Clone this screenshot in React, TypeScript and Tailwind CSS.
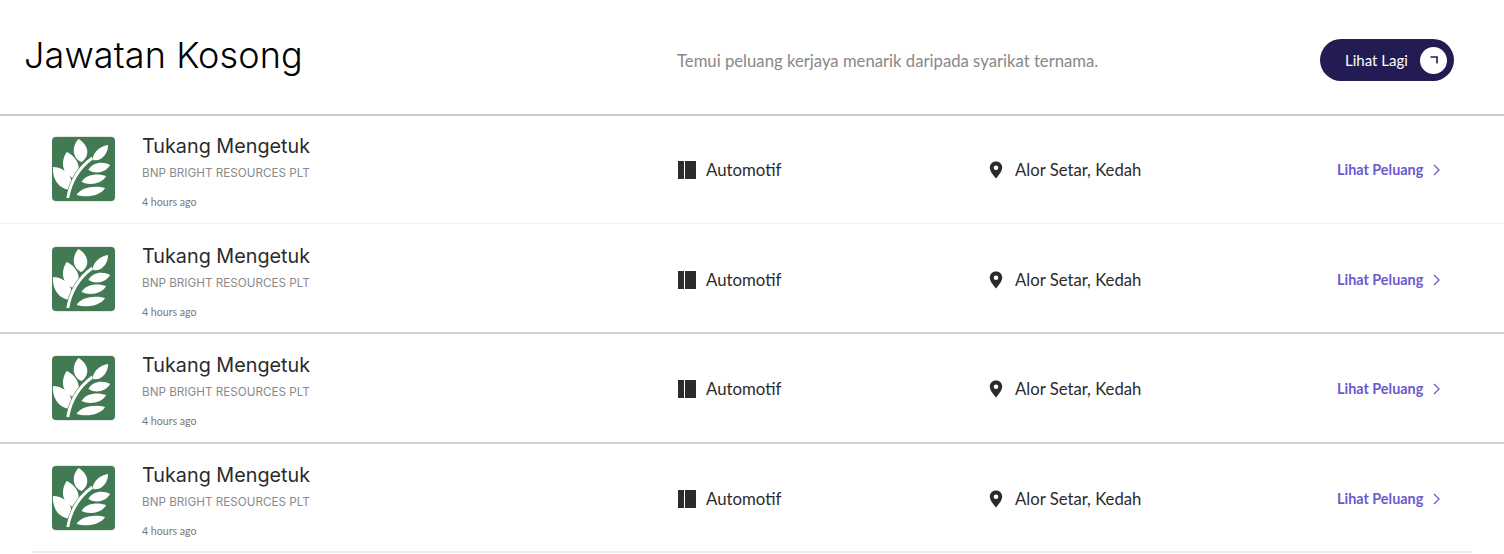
const LeafLogo = () => (
  <div className="w-[64px] h-[66px] shrink-0 -mt-[2px] border-y border-[#e3e6e3] rounded-[5px] flex items-center">
    <svg width="63" height="64" viewBox="0 0 64 64" preserveAspectRatio="none">
      <rect width="64" height="64" rx="4" fill="#427a53" />
      <g fill="#fff">
        <path d="M30 25C20 21 20 9 27 2C36 7 40 18 30 25Z" />
        <path d="M22 41C9 37 9 23 15 15C26 20 32 33 22 41Z" />
        <path d="M19 53C6 52 0 41 1 30C13 30 24 41 19 53Z" />
        <path d="M41 23C42 14 50 9 57 8C57 16 51 25 41 23Z" />
        <path d="M37 33C41 25 52 24 59 28C55 35 45 38 37 33Z" />
        <path d="M30 45C34 37 47 36 55 39C51 47 38 49 30 45Z" />
        <path d="M25 58C29 50 44 48 54 51C49 59 35 61 25 58Z" />
      </g>
      <path d="M16 61C19 44 27 31 41 21" fill="none" stroke="#427a53" strokeWidth="4" />
      <path d="M16 61C19 44 27 31 41 21" fill="none" stroke="#fff" strokeWidth="3" />
    </svg>
  </div>
)

const JobRow = ({ border }: { border: string }) => (
  <div className={`pl-[52px] flex items-center ${border}`}>
    <LeafLogo />
    <div className="w-[535px] ml-[26px] shrink-0">
      <p className="font-['Inter',sans-serif] text-[19.8px] leading-[28px] text-[#2b2b2b]">Tukang Mengetuk</p>
      <p className="font-['Inter',sans-serif] text-[11.7px] leading-[16px] mt-[5px] text-[#8a8a8a]">BNP BRIGHT RESOURCES PLT</p>
      <p className="font-['Lato',sans-serif] text-[10.6px] leading-[14px] mt-[14px] text-[#777]">4 hours ago</p>
    </div>
    <div className="w-[312px] shrink-0 flex items-center gap-[10px] font-['Lato',sans-serif] text-[16.8px] text-[#2b2b2b]">
      <div className="w-[18px] h-[18px] ml-[1px] flex gap-[1px]">
        <span className="w-[6px] bg-[#2b2b2b]" />
        <span className="w-[11px] bg-[#2b2b2b]" />
      </div>
      <span>Automotif</span>
    </div>
    <div className="w-[348px] shrink-0 mt-[1px] flex items-center gap-[12px] font-['Lato',sans-serif] text-[16.7px] text-[#2b2b2b]">
      <svg width="14" height="18" viewBox="0 0 14 18" fill="#2b2b2b">
        <path fillRule="evenodd" d="M7 0.5C3.3 0.5 0.8 3.2 0.8 6.6C0.8 10.8 5 15 7 17.5C9 15 13.2 10.8 13.2 6.6C13.2 3.2 10.7 0.5 7 0.5ZM7 4.4A2.3 2.3 0 1 1 7 9A2.3 2.3 0 1 1 7 4.4Z" />
      </svg>
      <span>Alor Setar, Kedah</span>
    </div>
    <div className="flex items-center gap-[9px] font-['Lato',sans-serif] text-[14.4px] font-bold text-[#6a5acd]">
      <span>Lihat Peluang</span>
      <svg width="9" height="12" viewBox="0 0 9 12" fill="none" stroke="#6a5acd" strokeWidth="1.3">
        <path d="M2 1L7 6L2 11" />
      </svg>
    </div>
  </div>
)

export default function App() {
  return (
    <div className="w-[1504px] h-[554px] bg-white overflow-hidden">
      <header className="h-[114px] pl-[25px] flex items-center">
        <h1 className="w-[652px] shrink-0 -ml-[1px] mr-[1px] font-['Inter',sans-serif] font-light text-[36px] leading-[44px] tracking-[0.1px] text-black -mt-[4px]">Jawatan Kosong</h1>
        <p className="w-[643px] shrink-0 font-['Lato',sans-serif] text-[16.7px] mt-[9px] text-[#888]">Temui peluang kerjaya menarik daripada syarikat ternama.</p>
        <button className="w-[134px] h-[42px] pl-[25px] pr-[7px] rounded-full bg-[#231c52] flex items-center justify-between mt-[6px] font-['Lato',sans-serif] text-[15px] text-white">
          <span>Lihat Lagi</span>
          <span className="w-[27px] h-[27px] rounded-full bg-white flex items-center justify-center">
            <svg width="10" height="10" viewBox="0 0 10 10" fill="none" stroke="#231c52" strokeWidth="1.6">
              <path d="M1.5 2H8V8.5" />
            </svg>
          </span>
        </button>
      </header>
      <JobRow border="h-[110px] pt-[1px] border-t-2 border-b border-t-[#c9c9c9] border-b-[#f0f0f0]" />
      <JobRow border="h-[110px] pt-[4px] border-b-2 border-[#d0d0d0]" />
      <JobRow border="h-[110px] pt-[2px] border-b-2 border-[#d0d0d0]" />
      <JobRow border="h-[107px] pt-[3px]" />
      <div className="h-[2px] mx-[32px] bg-[#eeeeee]" />
    </div>
  )
}
